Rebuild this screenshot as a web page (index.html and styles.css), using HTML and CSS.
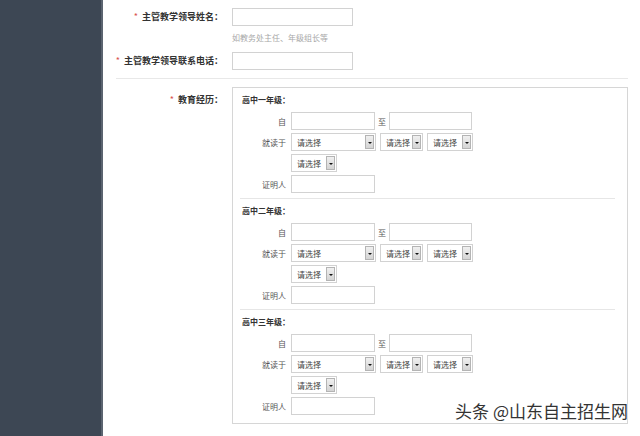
FILE: index.html
```html
<!DOCTYPE html>
<html lang="zh-CN">
<head>
<meta charset="utf-8">
<title>表单</title>
<link rel="stylesheet" href="styles.css">
</head>
<body>
<div class="page">
  <aside class="sidebar"></aside>
  <main class="content">
    <div class="form-row">
      <div class="label"><span class="req">*</span>主管教学领导姓名：</div>
      <div class="field"><div class="text-box w121"></div></div>
    </div>
    <div class="hint">如教务处主任、年级组长等</div>
    <div class="form-row">
      <div class="label"><span class="req">*</span>主管教学领导联系电话：</div>
      <div class="field"><div class="text-box w121"></div></div>
    </div>
    <div class="divider"></div>
    <div class="form-row top">
      <div class="label label-top"><span class="req">*</span>教育经历：</div>
      <div class="edu-box">
        <section class="grade">
          <div class="grade-title">高中一年级：</div>
          <div class="sub-row"><span class="sub-label">自</span><div class="sub-field"><div class="text-box w84"></div><span class="to">至</span><div class="text-box w83"></div></div></div>
          <div class="sub-row"><span class="sub-label">就读于</span><div class="sub-field"><div class="select w85"><span>请选择</span><i class="arrow"></i></div><div class="select w43"><span>请选择</span><i class="arrow"></i></div><div class="select w46"><span>请选择</span><i class="arrow"></i></div></div></div>
          <div class="sub-row"><span class="sub-label"></span><div class="sub-field"><div class="select w46"><span>请选择</span><i class="arrow"></i></div></div></div>
          <div class="sub-row"><span class="sub-label">证明人</span><div class="sub-field"><div class="text-box w84"></div></div></div>
        </section>
        <section class="grade">
          <div class="grade-title">高中二年级：</div>
          <div class="sub-row"><span class="sub-label">自</span><div class="sub-field"><div class="text-box w84"></div><span class="to">至</span><div class="text-box w83"></div></div></div>
          <div class="sub-row"><span class="sub-label">就读于</span><div class="sub-field"><div class="select w85"><span>请选择</span><i class="arrow"></i></div><div class="select w43"><span>请选择</span><i class="arrow"></i></div><div class="select w46"><span>请选择</span><i class="arrow"></i></div></div></div>
          <div class="sub-row"><span class="sub-label"></span><div class="sub-field"><div class="select w46"><span>请选择</span><i class="arrow"></i></div></div></div>
          <div class="sub-row"><span class="sub-label">证明人</span><div class="sub-field"><div class="text-box w84"></div></div></div>
        </section>
        <section class="grade last">
          <div class="grade-title">高中三年级：</div>
          <div class="sub-row"><span class="sub-label">自</span><div class="sub-field"><div class="text-box w84"></div><span class="to">至</span><div class="text-box w83"></div></div></div>
          <div class="sub-row"><span class="sub-label">就读于</span><div class="sub-field"><div class="select w85"><span>请选择</span><i class="arrow"></i></div><div class="select w43"><span>请选择</span><i class="arrow"></i></div><div class="select w46"><span>请选择</span><i class="arrow"></i></div></div></div>
          <div class="sub-row"><span class="sub-label"></span><div class="sub-field"><div class="select w46"><span>请选择</span><i class="arrow"></i></div></div></div>
          <div class="sub-row"><span class="sub-label">证明人</span><div class="sub-field"><div class="text-box w84"></div></div></div>
        </section>
      </div>
    </div>
  </main>
  <div class="watermark">头条 @山东自主招生网</div>
</div>
</body>
</html>
```
FILE: styles.css
```css
* { box-sizing: border-box; }
html, body { margin: 0; padding: 0; background: #fff; }
body {
  font-family: "Noto Sans CJK SC", "Noto Sans", sans-serif;
  color: #333;
  width: 640px;
  height: 436px;
  overflow: hidden;
}
.page {
  position: relative;
  display: flex;
  width: 640px;
  height: 436px;
}
.sidebar {
  width: 103px;
  flex: none;
  background: #3d4754;
  border-right: 2px solid #5b6470;
}
.content {
  flex: 1;
  padding: 8px 12px 0 0;
}
.form-row {
  display: grid;
  grid-template-columns: 120px 1fr;
  column-gap: 9px;
  align-items: center;
}
.form-row.top { align-items: start; }
.label {
  text-align: right;
  font-size: 9px;
  line-height: 18px;
  font-weight: 700;
  color: #333;
  white-space: nowrap;
}
.label-top { padding-top: 4px; }
.req {
  color: #d9534f;
  font-weight: 400;
  margin-right: 4px;
}
.text-box {
  height: 18px;
  border: 1px solid #d2d2d2;
  background: #fff;
}
.w121 { width: 121px; }
.w84 { width: 84px; }
.w83 { width: 83px; }
.w85 { width: 85px; }
.w43 { width: 43px; }
.w46 { width: 46px; }
.hint {
  margin: 6px 0 8px 129px;
  font-size: 8px;
  line-height: 12px;
  color: #a8a8a8;
}
.divider {
  margin: 8px 0 8px 13px;
  border-top: 1px solid #e8e8e8;
}
.edu-box {
  border: 1px solid #d6d6d6;
  padding-bottom: 3px;
  height: 337px;
}
.grade {
  margin: 0 12px 0 7px;
  padding: 6px 0 5px;
  border-bottom: 1px solid #e6e6e6;
}
.grade.last { border-bottom: none; }
.grade-title {
  padding-left: 2px;
  font-size: 8px;
  line-height: 12px;
  font-weight: 700;
  color: #333;
  margin-bottom: 6px;
}
.sub-row {
  display: grid;
  grid-template-columns: 46px 1fr;
  column-gap: 5px;
  align-items: center;
  height: 18px;
  margin-bottom: 3px;
}
.sub-row:last-child { margin-bottom: 0; }
.sub-label {
  text-align: right;
  font-size: 8px;
  color: #555;
  white-space: nowrap;
}
.sub-field {
  display: flex;
  align-items: center;
  gap: 4px;
}
.to {
  font-size: 8px;
  color: #555;
  margin: 0 -1px;
}
.select {
  position: relative;
  height: 18px;
  border: 1px solid #d2d2d2;
  background: #fff;
  display: flex;
  align-items: center;
  padding-left: 5px;
}
.select span {
  font-size: 8px;
  color: #444;
  white-space: nowrap;
}
.arrow {
  position: absolute;
  right: 1px;
  top: 1px;
  bottom: 1px;
  width: 9px;
  border: 1px solid #b4b4b4;
  background: linear-gradient(#f0f0f0, #d4d4d4);
}
.arrow::after {
  content: "";
  position: absolute;
  left: 2px;
  top: 6px;
  border-left: 2px solid transparent;
  border-right: 2px solid transparent;
  border-top: 2px solid #111;
}
.watermark {
  position: absolute;
  right: 12px;
  bottom: 14px;
  font-size: 17px;
  line-height: 22px;
  color: #333;
  text-shadow: 0 0 2px #fff, 0 0 2px #fff;
  white-space: nowrap;
}
```
